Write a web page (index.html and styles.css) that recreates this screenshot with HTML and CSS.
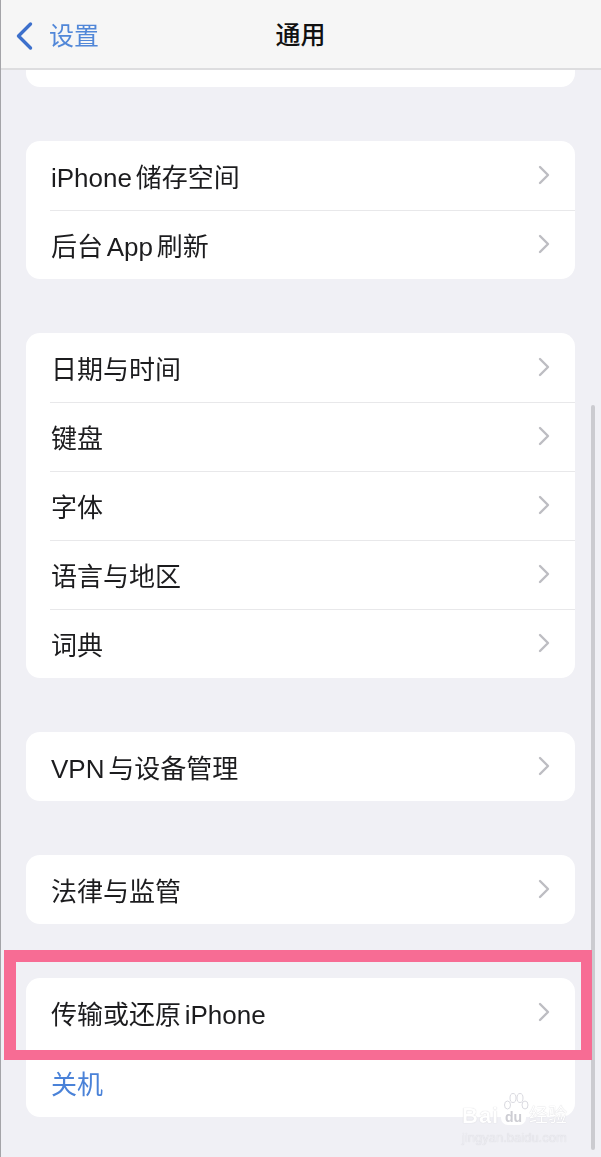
FILE: index.html
```html
<!DOCTYPE html>
<html lang="zh-CN">
<head>
<meta charset="utf-8">
<title>通用</title>
<link rel="stylesheet" href="styles.css">
</head>
<body>
<div class="page">
  <div class="content">
    <header class="nav">
      <a class="back">
        <svg class="back-icon" viewBox="0 0 18 30" width="18" height="30"><path d="M15.5 3 3.5 15l12 12" fill="none" stroke="#3d70cc" stroke-width="3.4" stroke-linecap="round" stroke-linejoin="round"/></svg>
        <span class="back-label">设置</span>
      </a>
      <h1 class="title">通用</h1>
    </header>
    <main class="list">
      <div class="card card-stub"></div>
      <section class="card">
        <div class="row"><span class="label">iPhone 储存空间</span><svg class="chev" viewBox="0 0 12 20" width="12" height="20"><path d="M2 2l8 8-8 8" fill="none" stroke="#bdbdc2" stroke-width="2.4" stroke-linecap="round" stroke-linejoin="round"/></svg></div>
        <div class="row"><span class="label">后台 App 刷新</span><svg class="chev" viewBox="0 0 12 20" width="12" height="20"><path d="M2 2l8 8-8 8" fill="none" stroke="#bdbdc2" stroke-width="2.4" stroke-linecap="round" stroke-linejoin="round"/></svg></div>
      </section>
      <section class="card">
        <div class="row"><span class="label">日期与时间</span><svg class="chev" viewBox="0 0 12 20" width="12" height="20"><path d="M2 2l8 8-8 8" fill="none" stroke="#bdbdc2" stroke-width="2.4" stroke-linecap="round" stroke-linejoin="round"/></svg></div>
        <div class="row"><span class="label">键盘</span><svg class="chev" viewBox="0 0 12 20" width="12" height="20"><path d="M2 2l8 8-8 8" fill="none" stroke="#bdbdc2" stroke-width="2.4" stroke-linecap="round" stroke-linejoin="round"/></svg></div>
        <div class="row"><span class="label">字体</span><svg class="chev" viewBox="0 0 12 20" width="12" height="20"><path d="M2 2l8 8-8 8" fill="none" stroke="#bdbdc2" stroke-width="2.4" stroke-linecap="round" stroke-linejoin="round"/></svg></div>
        <div class="row"><span class="label">语言与地区</span><svg class="chev" viewBox="0 0 12 20" width="12" height="20"><path d="M2 2l8 8-8 8" fill="none" stroke="#bdbdc2" stroke-width="2.4" stroke-linecap="round" stroke-linejoin="round"/></svg></div>
        <div class="row"><span class="label">词典</span><svg class="chev" viewBox="0 0 12 20" width="12" height="20"><path d="M2 2l8 8-8 8" fill="none" stroke="#bdbdc2" stroke-width="2.4" stroke-linecap="round" stroke-linejoin="round"/></svg></div>
      </section>
      <section class="card">
        <div class="row"><span class="label">VPN 与设备管理</span><svg class="chev" viewBox="0 0 12 20" width="12" height="20"><path d="M2 2l8 8-8 8" fill="none" stroke="#bdbdc2" stroke-width="2.4" stroke-linecap="round" stroke-linejoin="round"/></svg></div>
      </section>
      <section class="card">
        <div class="row"><span class="label">法律与监管</span><svg class="chev" viewBox="0 0 12 20" width="12" height="20"><path d="M2 2l8 8-8 8" fill="none" stroke="#bdbdc2" stroke-width="2.4" stroke-linecap="round" stroke-linejoin="round"/></svg></div>
      </section>
      <section class="card">
        <div class="row"><span class="label">传输或还原 iPhone</span><svg class="chev" viewBox="0 0 12 20" width="12" height="20"><path d="M2 2l8 8-8 8" fill="none" stroke="#bdbdc2" stroke-width="2.4" stroke-linecap="round" stroke-linejoin="round"/></svg></div>
        <div class="row row-power"><span class="label label-blue">关机</span></div>
      </section>
    </main>
  </div>
  <div class="scrollbar"></div>
  <div class="highlight"></div>
  <div class="watermark">
    <svg class="paw" viewBox="0 0 26 20" width="26" height="20"><g fill="#fff" fill-opacity="0.7" stroke="#d9d9df" stroke-width="1"><ellipse cx="4.5" cy="13" rx="3" ry="4"/><ellipse cx="10" cy="6" rx="3" ry="4.5"/><ellipse cx="17" cy="6" rx="3" ry="4.5"/><ellipse cx="22" cy="13" rx="3" ry="4"/></g></svg>
    <div class="wm-brand"><span class="wm-bai">Bai</span><span class="wm-du">du</span><span class="wm-jy">经验</span></div>
    <div class="wm-url">jingyan.baidu.com</div>
  </div>
</div>
</body>
</html>
```
FILE: styles.css
```css
* { box-sizing: border-box; }
html, body { margin: 0; padding: 0; }
body {
  background: #f0f0f5;
  font-family: "Liberation Sans", "Noto Sans CJK SC", sans-serif;
}
.page {
  position: relative;
  width: 601px;
  height: 1157px;
  overflow: hidden;
  background: #f0f0f5;
  border-left: 1px solid #a4a4a8;
}
.content { filter: blur(0.4px); }
.nav {
  position: relative;
  height: 70px;
  background: #f6f6f6;
  border-bottom: 2px solid #dddddf;
  display: flex;
  align-items: center;
  justify-content: center;
}
.back {
  position: absolute;
  left: 14px;
  top: 20px;
  display: flex;
  align-items: center;
  gap: 16px;
  color: #5187d8;
}
.back-icon { display: block; }
.back-label { font-size: 25px; line-height: 30px; margin-top: 1px; }
.title {
  margin: 1px 0 0 -1px;
  font-size: 25px;
  line-height: 30px;
  font-weight: 500;
  color: #111;
}
.list {
  padding: 0 25px;
  display: flex;
  flex-direction: column;
  gap: 54px;
}
.card {
  width: 549px;
  background: #fff;
  border-radius: 14px;
  overflow: hidden;
}
.card-stub {
  height: 17px;
  border-radius: 0 0 14px 14px;
}
.row {
  position: relative;
  height: 69px;
  display: flex;
  align-items: center;
  justify-content: space-between;
  padding: 0 25px;
}
.row + .row::before {
  content: "";
  position: absolute;
  top: 0;
  left: 24px;
  right: 0;
  height: 1px;
  background: #e8e8ea;
}
.row-power { height: 70px; }
.row + .row-power::before { display: none; }
.label {
  font-size: 26px;
  line-height: 34px;
  color: #1c1c1e;
  margin-top: 4px;
  word-spacing: -3.5px;
}
.label-blue { color: #4a82d8; margin-top: 5px; }
.chev { display: block; margin-top: -2px; }
.scrollbar {
  position: absolute;
  left: 590px;
  top: 405px;
  width: 4px;
  height: 745px;
  border-radius: 2px;
  background: #cbcbd0;
}
.highlight {
  position: absolute;
  left: 3px;
  top: 950px;
  width: 588px;
  height: 110px;
  border: solid #f76c94;
  border-width: 12px 11px 10px 12px;
}
.watermark {
  position: absolute;
  left: 461px;
  top: 1106px;
  width: 110px;
  height: 40px;
  color: #fff;
}
.paw { position: absolute; left: 41px; top: -14px; }
.wm-brand {
  display: flex;
  align-items: center;
  height: 20px;
  text-shadow: 0 0 1px #c4c4ca;
}
.wm-bai {
  width: 39px;
  font-size: 22px;
  line-height: 20px;
  font-weight: 700;
  letter-spacing: 1px;
}
.wm-du {
  width: 25px;
  height: 15px;
  margin: 3px 2px 0 0;
  border-radius: 7px;
  background: #fff;
  color: #cdcdd3;
  text-shadow: none;
  text-align: center;
  font-size: 14px;
  line-height: 14px;
  font-weight: 700;
}
.wm-jy {
  margin-left: 1px;
  font-size: 19px;
  line-height: 20px;
}
.wm-url {
  margin-top: 5px;
  font-size: 13px;
  line-height: 14px;
  color: #ebebf0;
  text-shadow: 0 0 1px #d0d0d6;
}
```
